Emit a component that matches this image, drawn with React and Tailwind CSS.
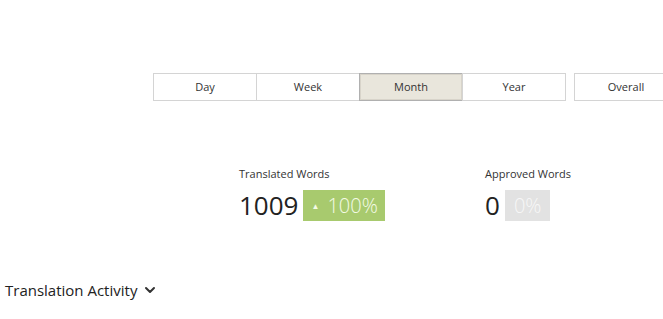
import { ChevronDown } from 'lucide-react';

const periods = ['Day', 'Week', 'Month', 'Year'];

function PeriodButton({ label, active, className = '' }) {
    return (
        <button
            className={`w-[104px] h-[28px] shrink-0 text-[11px] text-[#333] border ${
                active ? 'bg-[#e9e6dc] border-[#b0b0b0] shadow-[inset_0_0_0_1px_#d8d4ca]' : 'bg-white border-[#d4d4d4]'
            } ${className}`}
        >
            {label}
        </button>
    );
}

function Stat({ label, value, percent, positive }) {
    return (
        <div className="flex flex-col">
            <p className="text-[11px] text-[#333] leading-[14px]">{label}</p>
            <div className="flex flex-row items-center mt-[9px]">
                <span className="text-[26px] leading-[31px] text-[#222] mr-[5px]">{value}</span>
                <span
                    className={`h-[31px] flex items-center text-[20px] font-light ${
                        positive ? 'bg-[#a8ca6e] text-[#f4fbe6] px-[7px]' : 'bg-[#e2e2e2] text-[#f7f7f7] px-[9px]'
                    }`}
                >
                    {positive && <span className="text-[8px] mr-[8px] ml-[1px] font-normal">▲</span>}
                    {percent}
                </span>
            </div>
        </div>
    );
}

export default function App() {
    return (
        <div className="w-[663px] h-[319px] bg-white overflow-hidden font-['Open_Sans',sans-serif]">
            <div className="flex flex-row pl-[153px] pt-[73px] whitespace-nowrap">
                {periods.map((p, i) => (
                    <PeriodButton key={p} label={p} active={p === 'Month'} className={i > 0 ? '-ml-px' : ''} />
                ))}
                <PeriodButton label="Overall" className="ml-[8px]" />
            </div>
            <div className="flex flex-row pl-[239px] pt-[66px]">
                <div className="w-[246px]">
                    <Stat label="Translated Words" value="1009" percent="100%" positive />
                </div>
                <Stat label="Approved Words" value="0" percent="0%" />
            </div>
            <div className="flex flex-row items-center pl-[5px] pt-[58px]">
                <h3 className="text-[15px] text-[#222] font-medium">Translation Activity</h3>
                <ChevronDown className="w-4 h-4 ml-[5px] text-[#333]" strokeWidth={3} />
            </div>
        </div>
    );
}
